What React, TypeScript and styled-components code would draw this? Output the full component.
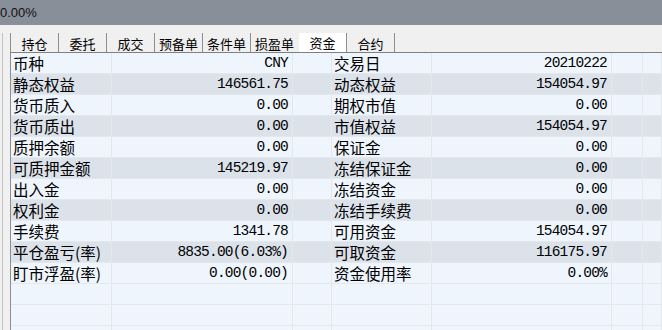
import styled, { createGlobalStyle } from "styled-components";

const GlobalStyle = createGlobalStyle`
  html, body {
    margin: 0;
    padding: 0;
    background: #f0f0f0;
    overflow: hidden;
  }
  * {
    box-sizing: border-box;
  }
`;

const tabs = ["持仓", "委托", "成交", "预备单", "条件单", "损盈单", "资金", "合约"];
const activeTab = 6;

const rows: [string, string, string, string][] = [
  ["币种", "CNY", "交易日", "20210222"],
  ["静态权益", "146561.75", "动态权益", "154054.97"],
  ["货币质入", "0.00", "期权市值", "0.00"],
  ["货币质出", "0.00", "市值权益", "154054.97"],
  ["质押余额", "0.00", "保证金", "0.00"],
  ["可质押金额", "145219.97", "冻结保证金", "0.00"],
  ["出入金", "0.00", "冻结资金", "0.00"],
  ["权利金", "0.00", "冻结手续费", "0.00"],
  ["手续费", "1341.78", "可用资金", "154054.97"],
  ["平仓盈亏(率)", "8835.00(6.03%)", "可取资金", "116175.97"],
  ["盯市浮盈(率)", "0.00(0.00)", "资金使用率", "0.00%"],
];

export default function App() {
  return (
    <Page>
      <GlobalStyle />
      <TopBar>0.00%</TopBar>
      <Body>
        <Gutter />
        <Panel>
          <TabRow>
            {tabs.map((t, i) => (
              <Tab key={t} $active={i === activeTab} $sep={i !== activeTab - 1}>
                {t}
              </Tab>
            ))}
          </TabRow>
          <Grid>
            {rows.map((r, i) => (
              <Row key={r[0]} $shade={i % 2 === 1}>
                <Label>{r[0]}</Label>
                <Value>{r[1]}</Value>
                <Cell />
                <Label>{r[2]}</Label>
                <Value>{r[3]}</Value>
                <Cell />
                <Cell />
              </Row>
            ))}
            {[0, 1, 2].map((k) => (
              <Row key={"e" + k}>
                <Cell />
                <Cell />
                <Cell />
                <Cell />
                <Cell />
                <Cell />
                <Cell />
              </Row>
            ))}
          </Grid>
        </Panel>
      </Body>
    </Page>
  );
}

const Page = styled.div`
  width: 662px;
  height: 330px;
  overflow: hidden;
  background: #f0f0f0;
`;

const TopBar = styled.div`
  height: 25px;
  background: #898f99;
  color: #111;
  font-family: "Liberation Sans", Arial, sans-serif;
  font-size: 13px;
  line-height: 26px;
`;

const Body = styled.div`
  display: flex;
  padding-top: 8px;
  height: 305px;
`;

const Gutter = styled.div`
  flex: none;
  width: 8px;
  margin-left: 2px;
  border-left: 1px solid #c4c4c4;
`;

const Panel = styled.div`
  flex: 1;
  display: flex;
  flex-direction: column;
  border-left: 1px solid #8e8e8e;
  min-width: 0;
`;

const TabRow = styled.div`
  display: flex;
  height: 19px;
  flex: none;
`;

const Tab = styled.div<{ $active: boolean; $sep: boolean }>`
  width: 48px;
  height: 19px;
  display: flex;
  align-items: center;
  justify-content: center;
  font-family: "Noto Sans CJK SC", sans-serif;
  font-size: 13px;
  color: #000;
  background: ${(p) => (p.$active ? "#ffffff" : "transparent")};
  border-right: 1px solid ${(p) => (p.$sep ? "#8e8e8e" : "transparent")};
  padding-top: ${(p) => (p.$active ? "0" : "2px")};
`;

const Grid = styled.div`
  border-top: 1px solid #7f7f7f;
  flex: 1;
  overflow: hidden;
  background: #eef5fd;
`;

const Row = styled.div<{ $shade?: boolean }>`
  display: grid;
  grid-template-columns: 101px 181px 39px 100px 180px 31px 1fr;
  height: 21px;
  background: ${(p) => (p.$shade ? "#dce2ea" : "#eef5fd")};
  border-bottom: 1px solid #e4e8ed;
`;

const Cell = styled.div`
  border-right: 1px solid #e4e8ed;
  height: 20px;
`;

const Label = styled(Cell)`
  font-family: "Noto Sans CJK SC", sans-serif;
  font-size: 15.5px;
  line-height: 20px;
  color: #000;
  padding-left: 2px;
  white-space: nowrap;
  overflow: hidden;
`;

const Value = styled(Cell)`
  font-family: "Liberation Mono", "DejaVu Sans Mono", monospace;
  font-size: 14.5px;
  letter-spacing: -0.8px;
  line-height: 21px;
  color: #000;
  text-align: right;
  padding-right: 4px;
  white-space: nowrap;
`;
